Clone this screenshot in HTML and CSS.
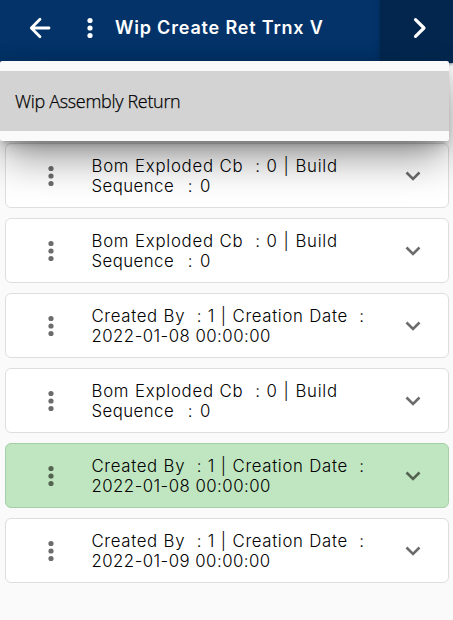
FILE: index.html
```
<!DOCTYPE html>
<html lang="en">
<head>
<meta charset="utf-8">
<title>Wip Create Ret Trnx V</title>
<link rel="stylesheet" href="styles.css">
</head>
<body>
<svg class="defs" width="0" height="0">
  <symbol id="dots" viewBox="0 0 24 24"><circle cx="12" cy="4.5" r="2.6"/><circle cx="12" cy="12" r="2.6"/><circle cx="12" cy="19.5" r="2.6"/></symbol>
  <symbol id="down" viewBox="0 0 24 24"><path d="M5.5 8.5 12 15l6.500-6.500" fill="none" stroke="currentColor" stroke-width="2.600"/></symbol>
</svg>
<header class="bar">
  <svg class="back" viewBox="0 0 24 24"><path d="M21 12H3.500M12 3.300 3.300 12l8.700 8.700" /></svg>
  <svg class="more"><use href="#dots"/></svg>
  <h1 class="title">Wip Create Ret Trnx V</h1>
  <div class="next"><svg class="chev" viewBox="0 0 24 24"><path d="M7.500 3.600 16 12l-8.500 8.400"/></svg></div>
</header>
<div class="menu"><div class="item"><span class="item-text">Wip Assembly Return</span></div></div>
<main class="list">
  <section class="card"><svg class="dots"><use href="#dots"/></svg><p class="text"><span class="line bom">Bom Exploded Cb&nbsp; : 0 | Build</span><span class="line seq">Sequence&nbsp; : 0</span></p><svg class="down"><use href="#down"/></svg></section>
  <section class="card"><svg class="dots"><use href="#dots"/></svg><p class="text"><span class="line bom">Bom Exploded Cb&nbsp; : 0 | Build</span><span class="line seq">Sequence&nbsp; : 0</span></p><svg class="down"><use href="#down"/></svg></section>
  <section class="card"><svg class="dots"><use href="#dots"/></svg><p class="text"><span class="line created">Created By&nbsp; : 1 | Creation Date&nbsp; :</span><span class="line date">2022-01-08 00:00:00</span></p><svg class="down"><use href="#down"/></svg></section>
  <section class="card"><svg class="dots"><use href="#dots"/></svg><p class="text"><span class="line bom">Bom Exploded Cb&nbsp; : 0 | Build</span><span class="line seq">Sequence&nbsp; : 0</span></p><svg class="down"><use href="#down"/></svg></section>
  <section class="card selected"><svg class="dots"><use href="#dots"/></svg><p class="text"><span class="line created">Created By&nbsp; : 1 | Creation Date&nbsp; :</span><span class="line date">2022-01-08 00:00:00</span></p><svg class="down"><use href="#down"/></svg></section>
  <section class="card"><svg class="dots"><use href="#dots"/></svg><p class="text"><span class="line created">Created By&nbsp; : 1 | Creation Date&nbsp; :</span><span class="line date">2022-01-09 00:00:00</span></p><svg class="down"><use href="#down"/></svg></section>
</main>
</body>
</html>
```
FILE: styles.css
```
* { box-sizing: border-box; }
body { margin: 0; height: 620px; overflow: hidden; background: #fafafa; font-family: Inter, "Liberation Sans", sans-serif; color: #000; position: relative; }
svg { display: block; flex: none; }
.defs { position: absolute; }
.bar { height: 63px; background: linear-gradient(#033369 65%, #022f62); display: flex; align-items: center; color: #fff; padding: 0 0 7px 28px; }
.back { width: 24px; height: 24px; fill: none; stroke: #fff; stroke-width: 2.8; stroke-linecap: round; stroke-linejoin: round; }
.more { width: 24px; height: 24px; fill: #fff; margin-left: 26px; }
.title { margin: 0 0 0 13px; font-size: 18px; line-height: 24px; font-weight: 600; white-space: pre; letter-spacing: 0.82px; flex: 1; }
.next { width: 73px; height: 63px; margin-bottom: -7px; background: #02264d; box-shadow: 0 0 4px #02264d; padding: 16px 0 0 28px; flex: none; }
.chev { width: 24px; height: 24px; fill: none; stroke: #fff; stroke-width: 3.2; stroke-linecap: round; stroke-linejoin: round; }
.menu { position: absolute; left: 0; top: 61px; width: 449px; height: 80px; background: #fafafa; border-radius: 2px; padding: 10px 0; z-index: 2; box-shadow: 0 5px 5px -3px rgba(0,0,0,.18), 0 8px 14px -3px rgba(0,0,0,.16), 0 20px 42px -4px rgba(0,0,0,.42); }
.item { height: 60px; background: #d3d3d3; display: flex; align-items: center; padding-left: 15px; font: 18px/24px "Open Sans", "Noto Sans", sans-serif; font-weight: 350; }
.item-text { letter-spacing: -0.32px; -webkit-text-stroke: .25px #000; }
.list { padding: 80px 4px 0 5px; display: grid; gap: 10px; }
.card { height: 65px; border: 1px solid #dedede; border-radius: 6px; background: #fff; display: flex; align-items: center; padding-left: 33px; }
.dots { width: 24px; height: 24px; fill: #6c6c6c; }
.text { margin: 0 0 0 28.500px; padding-top: 1px; font-size: 16.800px; line-height: 20px; width: 309px; font-weight: 360; }
.line { display: block; white-space: pre; width: max-content; }
.bom { letter-spacing: .73px; word-spacing: .45px; }
.seq { letter-spacing: .45px; word-spacing: 1.7px; }
.created { letter-spacing: .65px; word-spacing: .4px; }
.date { letter-spacing: .47px; }
.down { width: 24px; height: 24px; color: #6c6c6c; }
.selected { background: #c0e6c1; border-color: #a5cfa7; }
.selected .dots { fill: #53634f; }
.selected .down { color: #53634f; }
```
